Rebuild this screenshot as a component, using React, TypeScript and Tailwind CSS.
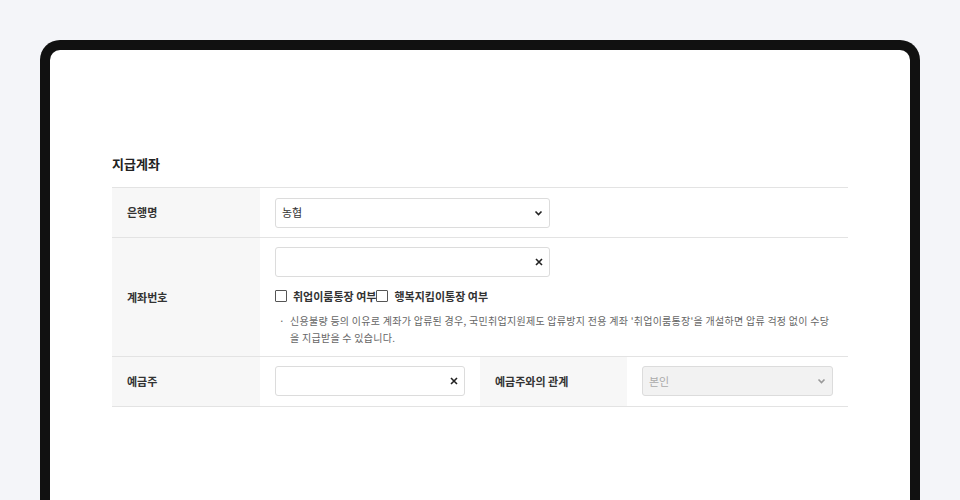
const font = { fontFamily: '"Noto Sans CJK KR", "Noto Sans", sans-serif' };

const Chevron = ({ color = "#222" }: { color?: string }) => (
    <svg width="9" height="6" viewBox="0 0 9 6" fill="none">
        <path d="M1.5 1.5 L4.5 4.5 L7.5 1.5" stroke={color} strokeWidth="1.6" />
    </svg>
);

const ClearX = () => (
    <svg width="8" height="8" viewBox="0 0 8 8" fill="none">
        <path d="M1 1 L7 7 M7 1 L1 7" stroke="#222" strokeWidth="1.6" />
    </svg>
);

const TextInput = ({ className }: { className: string }) => (
    <div className={`h-[30px] border border-[#dcdcdc] rounded-[3px] bg-white flex items-center justify-end pr-[6px] ${className}`}>
        <ClearX />
    </div>
);

const Check = ({ label }: { label: string }) => (
    <label className="flex items-center gap-[6px] text-[11px] font-bold text-[#333]">
        <span className="w-[12px] h-[12px] border border-[#555] rounded-[1px] bg-white" />
        {label}
    </label>
);

const labelCls = "bg-[#f7f7f7] flex items-center pl-[15px] text-[11px] font-bold text-[#333] border-b border-[#e3e3e3]";

export default function App() {
    return (
        <div className="min-h-[500px] bg-[#f4f5f9] pt-[40px] px-[40px] overflow-hidden" style={font}>
            <div className="h-[480px] border-[10px] border-b-0 border-[#111] rounded-t-[20px] bg-white px-[52px] pt-[104px]">
                <div className="px-[10px]">
                    <h2 className="text-[13px] leading-[20px] font-bold text-[#222] mb-[13px]">지급계좌</h2>
                    <div className="border-t border-[#e3e3e3] grid grid-cols-[148px_220px_147px_1fr]">
                        <div className={labelCls}>은행명</div>
                        <div className="col-span-3 h-[50px] px-[15px] flex items-center border-b border-[#e3e3e3]">
                            <div className="w-[275px] h-[30px] border border-[#dcdcdc] rounded-[3px] flex items-center justify-between pl-[6px] pr-[6px] text-[11px] text-[#333]">
                                <span>농협</span>
                                <Chevron />
                            </div>
                        </div>

                        <div className={labelCls}>계좌번호</div>
                        <div className="col-span-3 px-[15px] pt-[9px] pb-[10px] border-b border-[#e3e3e3]">
                            <TextInput className="w-[275px]" />
                            <div className="flex items-center mt-[11px]">
                                <Check label="취업이룸통장 여부" />
                                <Check label="행복지킴이통장 여부" />
                            </div>
                            <div className="flex mt-[7px] text-[10px] leading-[17px] text-[#666] tracking-[0.27px]">
                                <span className="w-[11px] pl-[4px] shrink-0">·</span>
                                <p className="pl-[4px]">신용불량 등의 이유로 계좌가 압류된 경우, 국민취업지원제도 압류방지 전용 계좌 '취업이룸통장'을 개설하면 압류 걱정 없이 수당을 지급받을 수 있습니다.</p>
                            </div>
                        </div>

                        <div className={labelCls}>예금주</div>
                        <div className="h-[50px] px-[15px] flex items-center border-b border-[#e3e3e3]">
                            <TextInput className="w-full" />
                        </div>
                        <div className={labelCls}>예금주와의 관계</div>
                        <div className="px-[15px] flex items-center border-b border-[#e3e3e3]">
                            <div className="w-full h-[30px] border border-[#dcdcdc] rounded-[3px] bg-[#f2f2f2] flex items-center justify-between pl-[6px] pr-[6px] text-[11px] text-[#aaa]">
                                <span>본인</span>
                                <Chevron color="#999" />
                            </div>
                        </div>
                    </div>
                </div>
            </div>
        </div>
    );
}
